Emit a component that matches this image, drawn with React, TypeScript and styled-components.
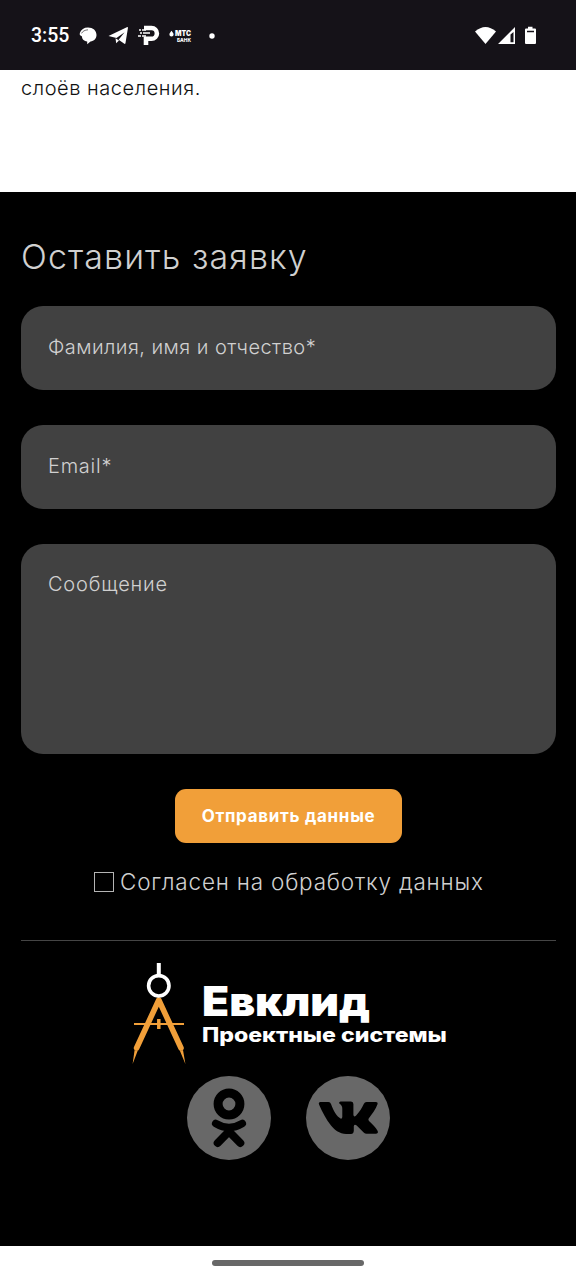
import React from "react";
import styled, { createGlobalStyle } from "styled-components";

const GlobalStyle = createGlobalStyle`
  *, *::before, *::after { box-sizing: border-box; }
  html, body { margin: 0; background: #fff; }
  body { font-family: Inter, "Noto Sans", sans-serif; }
`;

const Screen = styled.div`
  width: 576px;
  height: 1280px;
  display: flex;
  flex-direction: column;
  overflow: hidden;
  background: #fff;
`;

const StatusBar = styled.header`
  flex: none;
  display: flex;
  align-items: center;
  justify-content: space-between;
  height: 70px;
  padding: 1px 39px 0 31px;
  background: #151218;
  color: #fff;
`;

const StatusGroup = styled.div`
  display: flex;
  align-items: center;
`;

const Clock = styled.span`
  width: 48px;
  font: 500 19.5px/24px Roboto, sans-serif;
`;

const StatusIcon = styled.svg<{ $gap?: number }>`
  display: block;
  flex: none;
  margin-left: ${({ $gap = 0 }) => $gap}px;
`;

const Article = styled.section`
  flex: none;
  height: 122px;
  padding: 5px 21px;
`;

const Paragraph = styled.p`
  margin: 0;
  font-size: 20px;
  line-height: 26px;
  font-weight: 300;
  letter-spacing: 0.55px;
  color: #111;
`;

const ContactSection = styled.main`
  flex: none;
  height: 1054px;
  padding: 45px 20px 0 21px;
  background: #000;
  display: flex;
  flex-direction: column;
`;

const Title = styled.h2`
  margin: 0 0 29px;
  font-size: 34px;
  line-height: 40px;
  font-weight: 300;
  letter-spacing: 1.1px;
  color: #d0d0d0;
`;

const Form = styled.form`
  display: flex;
  flex-direction: column;
  gap: 35px;
`;

const Field = styled.input`
  display: block;
  width: 100%;
  height: 84px;
  padding: 0 27px 2px;
  border: 0;
  border-radius: 22px;
  background: #414141;
  color: #d0d0d0;
  font: 300 20px/26px Inter, "Noto Sans", sans-serif;
  letter-spacing: 0.45px;
  &::placeholder { color: #d0d0d0; opacity: 1; }
  &[type="email"] { letter-spacing: 0.75px; }
`;

const MessageField = styled(Field).attrs({ as: "textarea" })`
  height: 210px;
  padding: 27px;
  letter-spacing: 0.8px;
  resize: none;
`;

const SubmitButton = styled.button`
  align-self: center;
  width: 227px;
  height: 54px;
  padding: 0;
  border: 0;
  border-radius: 11px;
  background: #f19f39;
  color: #fff;
  font: 700 17px/24px Inter, "Noto Sans", sans-serif;
  letter-spacing: 0.7px;
  white-space: nowrap;
`;

const Consent = styled.label`
  display: flex;
  align-items: center;
  align-self: center;
  gap: 6px;
  margin-top: 24px;
  width: 389px;
  height: 30px;
  font-size: 22.5px;
  line-height: 30px;
  font-weight: 300;
  letter-spacing: 0.8px;
  white-space: nowrap;
  color: #d0d0d0;
`;

const Checkbox = styled.input`
  appearance: none;
  flex: none;
  width: 20px;
  height: 20px;
  margin: 0;
  border: 1px solid #b4b4b4;
  background: #000;
`;

const Footer = styled.footer`
  margin-top: 43px;
  border-top: 1px solid #454545;
  display: flex;
  flex-direction: column;
  align-items: center;
  padding-top: 22px;
`;

const Logo = styled.div`
  display: flex;
  width: 314px;
  height: 101px;
  gap: 16px;
`;

const LogoMark = styled.svg`
  flex: none;
  width: 54px;
  height: 102px;
`;

const Wordmark = styled.div`
  padding-top: 17px;
  color: #fff;
  white-space: nowrap;
`;

const BrandName = styled.div`
  font-size: 41px;
  line-height: 43px;
  font-weight: 900;
  transform: scaleX(1.08);
  transform-origin: left;
`;

const BrandTagline = styled.div`
  font-size: 20px;
  line-height: 24px;
  font-weight: 800;
  transform: scaleX(1.153);
  transform-origin: left;
`;

const SocialLinks = styled.nav`
  display: flex;
  gap: 35px;
  margin-top: 12px;
`;

const SocialLink = styled.a`
  display: block;
  width: 84px;
  height: 84px;
  border-radius: 50%;
  background: #686868;
`;

const NavigationBar = styled.div`
  flex: 1;
  display: flex;
  justify-content: center;
  align-items: center;
`;

const HomeHandle = styled.div`
  width: 152px;
  height: 6px;
  border-radius: 3px;
  background: #686868;
`;

function NotificationIcons() {
  return (
    <>
      <StatusIcon width="18" height="18" viewBox="0 0 18 18" fill="#fff">
        <path d="M.8 6C2 2.500 5 .5 9 .5c5 0 8.500 3 8.500 7.500 0 3.500-2.500 6-6 6.600L8.200 17.200v-2.800C4.500 14 3 12 3 9.500L.8 8z" />
        <path d="M2.500 6.400C3.500 4.200 6 3 9 2.800" fill="none" stroke="#151218" strokeWidth=".6" />
      </StatusIcon>
      <StatusIcon $gap={11} width="21" height="19" viewBox="0 0 21 19" fill="#fff">
        <path d="M.5 10 18.800 1.200q1.400-.5 1.100 1L17.500 17q-.3 1.400-1.500.6l-5.400-3.900 6-7.500-8.100 5.900z" />
        <path d="M7.500 12.200 11 14.500l-2.800 2.800z" />
      </StatusIcon>
      <StatusIcon $gap={9} width="22" height="21" viewBox="0 0 22 21" fill="none" stroke="#fff">
        <path d="M6 3h7.500a5.400 5.400 0 0 1 0 10.800H8V20" strokeWidth="4.600" />
        <path d="M1 5h2M4 5h4M2 8h2M5 8h7M0 11h3M4 11h4" strokeWidth="1.300" />
      </StatusIcon>
      <StatusIcon $gap={9} width="23" height="12" viewBox="0 0 23 12" fill="#fff">
        <path d="M2.500.8C3.500 2.200 4.600 3.400 4.600 4.500a2.100 2.100 0 0 1-4.200 0C.4 3.400 1.500 2.200 2.500.8z" />
        <text x="6" y="6.300" fontFamily="Inter, sans-serif" fontSize="7.500" fontWeight="900" textLength="16" lengthAdjust="spacingAndGlyphs">МТС</text>
        <text x="8" y="11.600" fontFamily="Inter, sans-serif" fontSize="5" fontWeight="800" textLength="14" lengthAdjust="spacingAndGlyphs">БАНК</text>
      </StatusIcon>
      <StatusIcon $gap={17} width="6" height="6" viewBox="0 0 6 6" fill="#fff">
        <circle cx="3" cy="3" r="2.700" />
      </StatusIcon>
    </>
  );
}

function SystemIcons() {
  return (
    <StatusIcon width="62" height="20" viewBox="0 0 62 20" fill="#fff">
      <path d="M0 5.500Q10.500-3.500 21 5.500L10.500 18z" />
      <path fillRule="evenodd" d="M23 18 40 1v17zM35.500 8.500v7.800H38.500V6z" />
      <path fillRule="evenodd" d="M53 .8h4.500v1.700H60q1 0 1 1V17q0 1-1 1h-9q-1 0-1-1V3.500q0-1 1-1h2zM52 4.800v1.400h7V4.800z" />
    </StatusIcon>
  );
}

function CompassMark() {
  return (
    <LogoMark viewBox="0 0 54 102" fill="none">
      <path d="M2 61h50" stroke="#f19f39" strokeWidth="1.800" />
      <path d="M26.800 56v10" stroke="#f19f39" strokeWidth="3.500" />
      <path d="M4.600 85 26.800 37 49 85" stroke="#f19f39" strokeWidth="5.600" strokeLinecap="round" strokeLinejoin="round" />
      <path d="M2.600 87 .6 101 5.600 88zM51 87l2.400 14-5.400-13z" fill="#f19f39" />
      <path d="M26.800 0v12" stroke="#fff" strokeWidth="4" />
      <circle cx="26.800" cy="22.800" r="10.200" fill="#000" stroke="#fff" strokeWidth="3.600" />
    </LogoMark>
  );
}

export default function App() {
  return (
    <>
      <GlobalStyle />
      <Screen>
        <StatusBar>
          <StatusGroup>
            <Clock>3:55</Clock>
            <NotificationIcons />
          </StatusGroup>
          <SystemIcons />
        </StatusBar>
        <Article>
          <Paragraph>слоёв населения.</Paragraph>
        </Article>
        <ContactSection>
          <Title>Оставить заявку</Title>
          <Form>
            <Field placeholder="Фамилия, имя и отчество*" />
            <Field type="email" placeholder="Email*" />
            <MessageField placeholder="Сообщение" />
            <SubmitButton type="button">Отправить данные</SubmitButton>
          </Form>
          <Consent>
            <Checkbox type="checkbox" />
            <span>Согласен на обработку данных</span>
          </Consent>
          <Footer>
            <Logo>
              <CompassMark />
              <Wordmark>
                <BrandName>Евклид</BrandName>
                <BrandTagline>Проектные системы</BrandTagline>
              </Wordmark>
            </Logo>
            <SocialLinks>
              <SocialLink aria-label="Одноклассники">
                <svg width="84" height="84" viewBox="0 0 84 84" fill="none" stroke="#000" strokeLinecap="round" strokeLinejoin="round">
                  <circle cx="42" cy="28" r="10.900" strokeWidth="9" />
                  <path d="M28.700 47.500Q42 55.500 55.300 47.500" strokeWidth="7.500" />
                  <path d="M30.700 67 42 55.500 53.300 67" strokeWidth="8" />
                </svg>
              </SocialLink>
              <SocialLink aria-label="ВКонтакте">
                <svg width="84" height="84" viewBox="0 0 84 84" fill="#000">
                  <path d="M14.500 26h8q1.800 0 2.500 2c2.500 7 6 12.500 9.500 14.500q1.500.6 1.800-1.500v-8c0-3-1-4-3-5.500q-.8-1.900 1.200-2.100H45q2.400 0 2.400 2.500V39q.5 2.500 2.500.7c3.500-4 6.500-8.300 8-12q.8-1.700 2.600-1.700h9.300q2.300 0 1.700 2.200c-1.500 4.500-5.500 9.800-8.800 14.300q-.8 1.300.3 2.600c3.500 3.400 7 6.900 8.700 10q.9 2.600-2 2.700h-9q-1.800 0-3-1.200l-7-7q-2.300-2-2.900.6v4.500Q47.500 58 45 58c-8 .4-14-1-20-8.500-5-6.200-8.500-13.200-12-21q-.8-2.400 1.500-2.500z" />
                </svg>
              </SocialLink>
            </SocialLinks>
          </Footer>
        </ContactSection>
        <NavigationBar>
          <HomeHandle />
        </NavigationBar>
      </Screen>
    </>
  );
}
